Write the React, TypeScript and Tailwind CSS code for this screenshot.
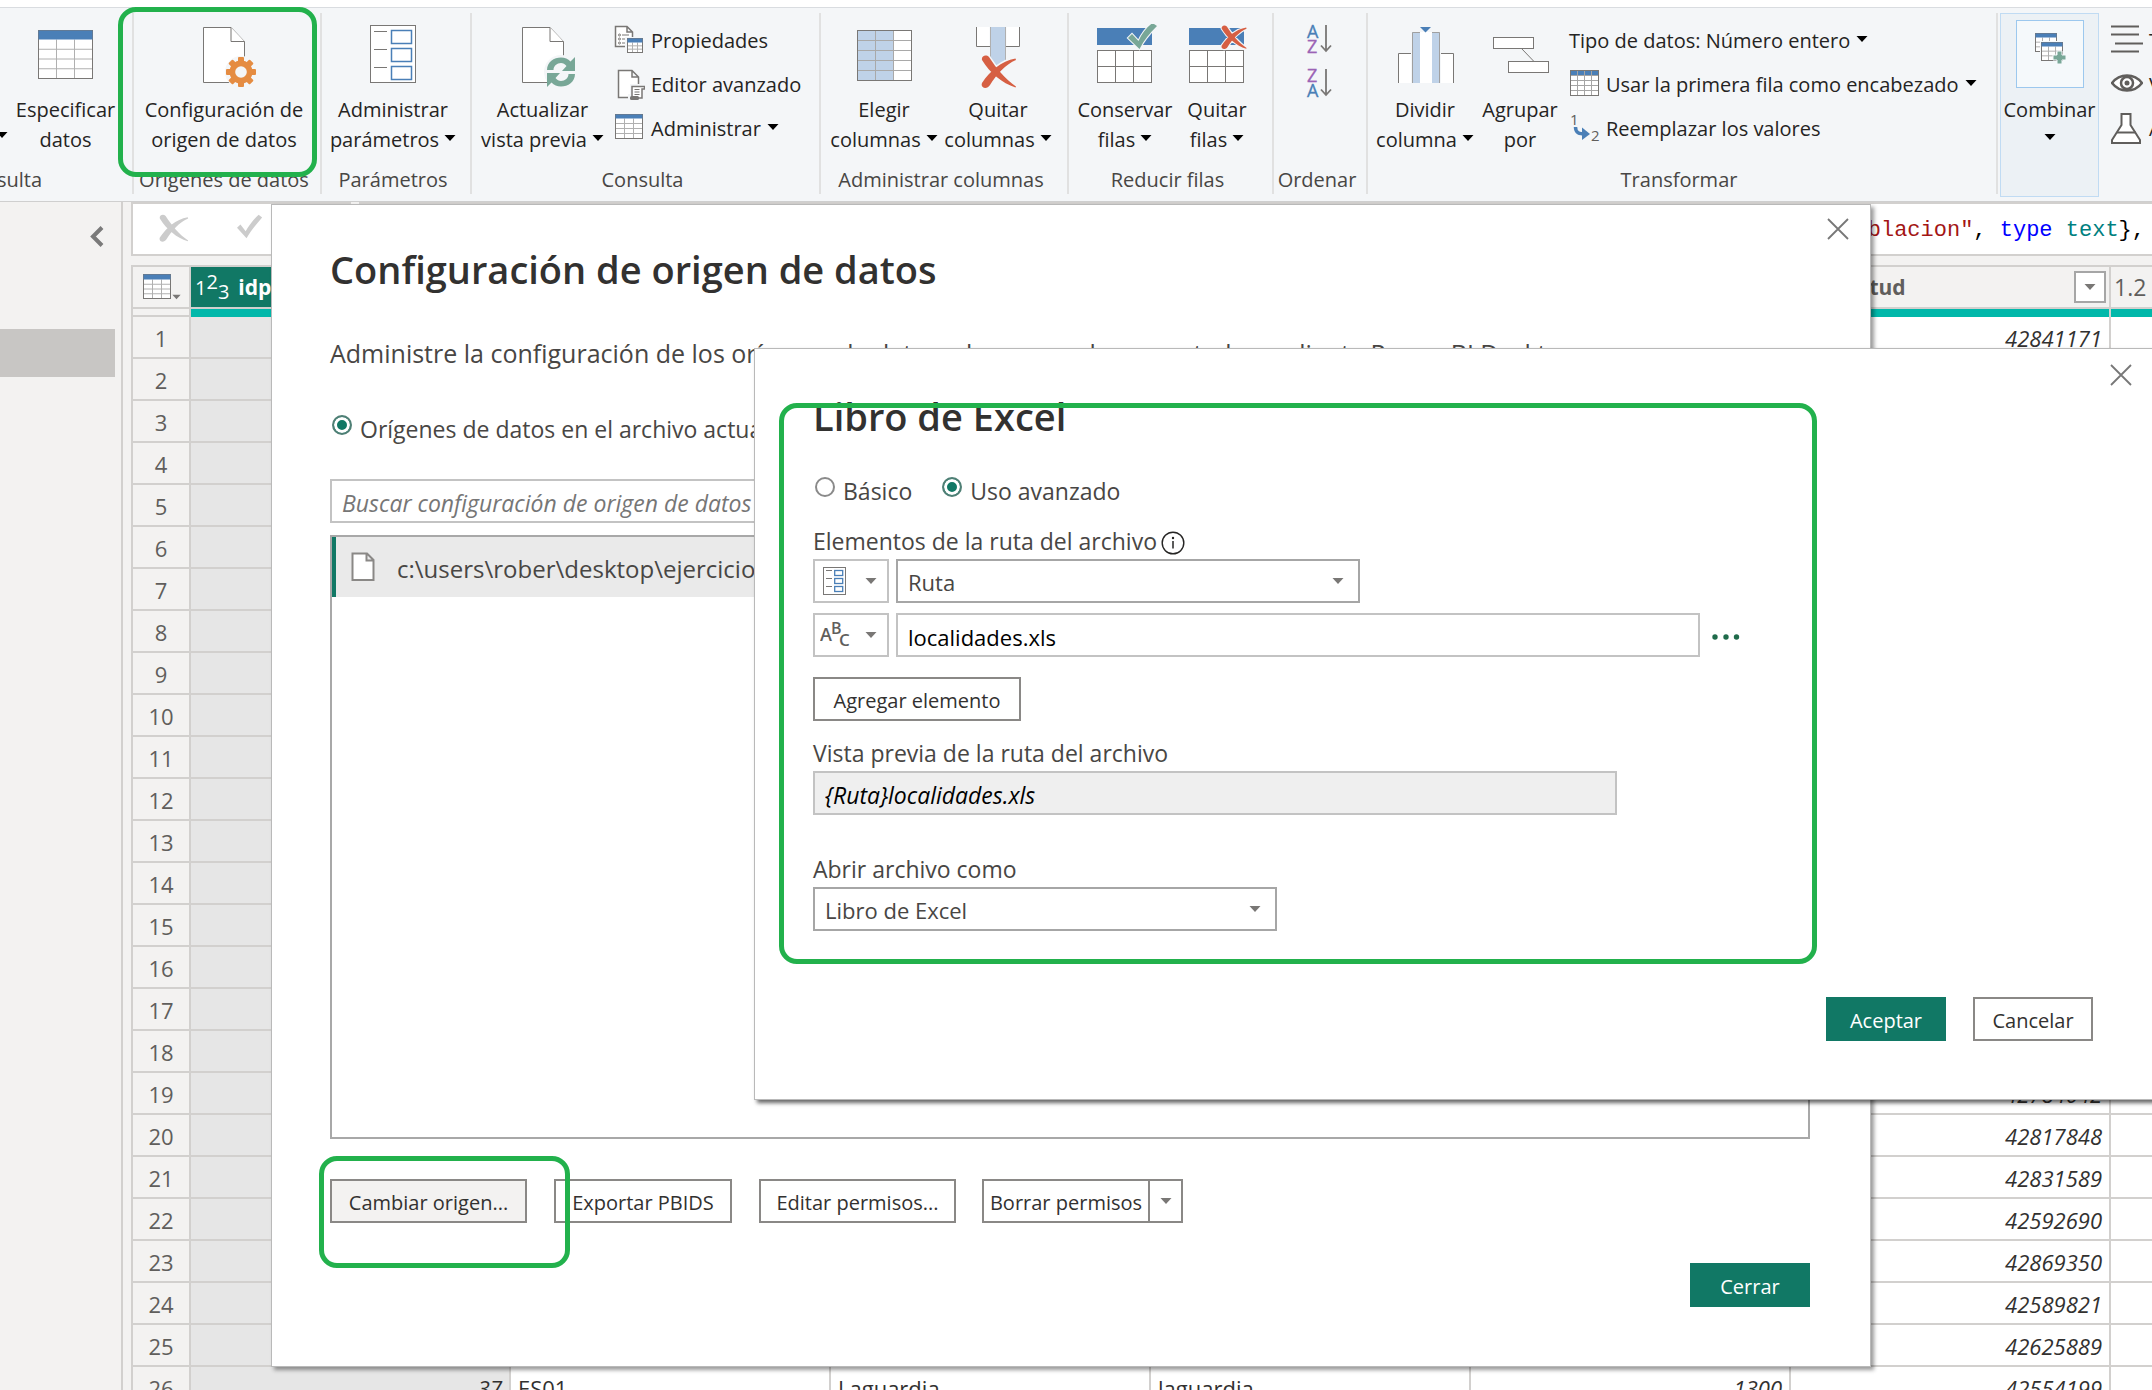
import React from "react";

const GRAY = "#797775";
const BLUE = "#4a7fb7";
const LIGHT = "#bfd2e8";
const TEAL = "#78a797";
const RED = "#d65f43";

type Kids = { children?: React.ReactNode };

/* ---------- shared drawings ---------- */

function Caret({ className = "mb-1 text-black" }: { className?: string }) {
  return (
    <svg width="12" height="6" viewBox="0 0 12 6" className={"inline-block shrink-0 " + className} aria-hidden="true">
      <path d="M0.5 0h11L6 6z" fill="currentColor" />
    </svg>
  );
}

function BigIcon({ children }: Kids) {
  return (
    <svg width="64" height="64" viewBox="0 0 64 64" fill="none" aria-hidden="true">
      {children}
    </svg>
  );
}

function SmallIcon({ children }: Kids) {
  return (
    <svg width="32" height="32" viewBox="0 0 32 32" fill="none" className="shrink-0" aria-hidden="true">
      {children}
    </svg>
  );
}

const CROSS =
  "M1 5C0 1 5 -1 8 2C15 13 24 24 35 31.500L34.500 32.500C21 28 9 18 1 5Z M34.500 3.500L35 5C25 9 15 20 9 30C6 35 -1 33 1 28C9 16 20 6 34.500 3.500Z";

function CrossShape({ color, halo }: { color: string; halo?: string }) {
  return (
    <g>
      {halo && <path d={CROSS} stroke={halo} strokeWidth="3" />}
      <path d={CROSS} fill={color} />
    </g>
  );
}

const CHECK = "M0 15L4 11L10.500 18C14 10 19 4 24.500 0L29 3C22 10 16 17 11.500 26Z";

function Grid({ x, y, w, h, cols, rows, head = 0 }: { x: number; y: number; w: number; h: number; cols: number; rows: number; head?: number }) {
  const lines: React.ReactNode[] = [];
  for (let i = 1; i < cols; i++) {
    const px = x + (w * i) / cols;
    lines.push(<path key={"c" + i} d={`M${px} ${y + head}V${y + h}`} stroke="#b0b0b0" />);
  }
  for (let i = 1; i < rows; i++) {
    const py = y + head + ((h - head) * i) / rows;
    lines.push(<path key={"r" + i} d={`M${x} ${py}H${x + w}`} stroke="#b0b0b0" />);
  }
  return (
    <g>
      <rect x={x} y={y} width={w} height={h} fill="#fff" />
      {lines}
      <rect x={x} y={y} width={w} height={h} stroke={GRAY} fill="none" />
      {head > 0 && <rect x={x} y={y} width={w} height={head} fill={BLUE} />}
    </g>
  );
}

function PageShape() {
  return (
    <g stroke={GRAY} fill="#fff">
      <path d="M11.500 3.500H39L52.500 17.500V58.500H11.500Z" />
      <path d="M39 3.500V17.500H52.500" />
    </g>
  );
}

function ParamsShape() {
  return (
    <g>
      <rect x="9.500" y="1.500" width="45" height="57" fill="#fff" stroke={GRAY} />
      {[6.5, 24.5, 42.5].map((y) => (
        <g key={y}>
          <path d={`M13 ${y + 1}H26`} stroke={GRAY} />
          <rect x="30.500" y={y} width="20" height="13" stroke={BLUE} strokeWidth="1.500" fill="#fff" />
        </g>
      ))}
    </g>
  );
}

function CloseIcon() {
  return (
    <svg width="22" height="22" viewBox="0 0 22 22" fill="none" aria-hidden="true">
      <path d="M1 1L21 21M21 1L1 21" stroke="#777" strokeWidth="1.800" />
    </svg>
  );
}

/* ---------- ribbon ---------- */

function Group({ label, className, children }: { label: string; className: string } & Kids) {
  return (
    <section className={"flex shrink-0 flex-col border-r-2 border-[#e1e1e1] " + className}>
      <div className="flex h-[152px] items-start pt-[11px]">{children}</div>
      <div className="whitespace-nowrap pr-[6px] pt-px text-center leading-7 text-[#484644]">{label}</div>
    </section>
  );
}

function BigButton({ lines, caret, className, icon }: { lines: [string, string]; caret?: boolean; className: string; icon: React.ReactNode }) {
  return (
    <button type="button" className={"flex shrink-0 flex-col items-center whitespace-nowrap leading-[30px] " + className}>
      <BigIcon>{icon}</BigIcon>
      <span className="mt-[7px]">{lines[0]}</span>
      <span className="flex items-center gap-[5px]">
        {lines[1]}
        {caret && <Caret />}
      </span>
    </button>
  );
}

function SmallButton({ icon, caret, children }: { icon?: React.ReactNode; caret?: boolean } & Kids) {
  return (
    <button type="button" className="flex h-[44px] items-center gap-[6px] whitespace-nowrap text-left">
      {icon && <SmallIcon>{icon}</SmallIcon>}
      <span>{children}</span>
      {caret && <Caret />}
    </button>
  );
}

function SmallList({ className = "", children }: { className?: string } & Kids) {
  return <div className={"-mt-[5px] flex flex-col " + className}>{children}</div>;
}

function SortButton({ first, second, label }: { first: [string, string]; second: [string, string]; label: string }) {
  return (
    <button type="button" aria-label={label} className="flex h-[44px] items-start">
      <svg width="28" height="30" viewBox="0 0 28 30" fill="none" fontFamily="Open Sans, sans-serif" fontSize="18">
        <text x="1" y="14" fill={first[1]} stroke={first[1]} strokeWidth="0.300">{first[0]}</text>
        <text x="1" y="29" fill={second[1]} stroke={second[1]} strokeWidth="0.300">{second[0]}</text>
        <path d="M20 1V27M15 21.500L20 27L25 21.500" stroke={GRAY} strokeWidth="1.800" />
      </svg>
    </button>
  );
}

function Ribbon() {
  return (
    <header className="flex h-[195px] shrink-0 items-start border-y border-b-[#cfcfcf] border-t-[#d9dce0] bg-[#f4f6f8] pt-[5px] text-xl text-[#252423]">
      <section className="flex w-[134px] shrink-0 flex-col border-r-2 border-[#e1e1e1]">
        <div className="flex h-[152px] items-start pt-[11px]">
          <button type="button" aria-label="Más opciones" className="flex h-[131px] w-2 items-end justify-end pb-[13px]">
            <Caret />
          </button>
          <BigButton className="w-[115px]" lines={["Especificar", "datos"]} icon={<Grid x={4.5} y={6.5} w={54} h={48} cols={3} rows={4} head={9} />} />
        </div>
        <div className="flex w-[42px] justify-end overflow-hidden whitespace-nowrap pt-px leading-7 text-[#484644]">Nueva consulta</div>
      </section>

      <Group label="Orígenes de datos" className="w-[188px]">
        <BigButton
          className="w-[180px]"
          lines={["Configuración de", "origen de datos"]}
          icon={
            <>
              <PageShape />
              <circle cx="49" cy="48" r="16" fill="#f4f6f8" />
              <g fill="#e58c42">
                {[0, 45, 90, 135].map((a) => (
                  <rect key={a} x="46" y="33" width="6" height="30" rx="1" transform={`rotate(${a} 49 48)`} />
                ))}
                <circle cx="49" cy="48" r="11.500" />
              </g>
              <circle cx="49" cy="48" r="5.800" fill="#f4f6f8" />
            </>
          }
        />
      </Group>

      <Group label="Parámetros" className="w-[150px]">
        <BigButton caret className="w-[142px]" lines={["Administrar", "parámetros"]} icon={<ParamsShape />} />
      </Group>

      <Group label="Consulta" className="w-[349px]">
        <BigButton
          caret
          className="w-[141px]"
          lines={["Actualizar", "vista previa"]}
          icon={
            <>
              <PageShape />
              <circle cx="50" cy="48" r="17" fill="#f4f6f8" />
              <g fill={TEAL}>
                <path d="M36 46C36 38 43 33.500 50 33.500C54 33.500 57 35 59.500 37.500L64 33V47H51L55.500 42C54 40 52 39 50 39C46 39 42.500 42 42.500 46Z" />
                <path d="M64 50C64 58 57 62.500 50 62.500C46 62.500 43 61 40.500 58.500L36 63V49H49L44.500 54C46 56 48 57 50 57C54 57 57.500 54 57.500 50Z" />
              </g>
            </>
          }
        />
        <SmallList>
          <SmallButton
            icon={
              <>
                <path d="M2.500 1.500H14L19.500 7V21.500H2.500Z M14 1.500V7H19.500" fill="#fff" stroke={GRAY} strokeWidth="1.500" />
                {[10, 14, 18].map((y) => (
                  <g key={y} stroke={GRAY}>
                    <circle cx="6.500" cy={y} r="1" />
                    <path d={`M9 ${y}H16`} />
                  </g>
                ))}
                <rect x="12" y="12" width="20" height="18" fill="#f4f6f8" />
                <Grid x={14.5} y={13.5} w={15} h={14} cols={3} rows={3} head={4} />
              </>
            }
          >
            Propiedades
          </SmallButton>
          <SmallButton
            icon={
              <>
                <path d="M5.500 1.500H19L25.500 8V28.500H5.500Z M19 1.500V8H25.500" fill="#fff" stroke={GRAY} strokeWidth="1.500" />
                <path d="M17 15H32V31H15V25H17Z" fill="#f4f6f8" />
                <path d="M19 27.500V17.500H31.500V20H29V29H20" fill="#fff" stroke={GRAY} strokeWidth="1.500" />
                <path d="M21.500 20.500H26.500M21.500 23H26.500M21.500 25.500H26.500" stroke={GRAY} />
                <rect x="17" y="27" width="9" height="4" rx="1.500" fill={GRAY} />
              </>
            }
          >
            Editor avanzado
          </SmallButton>
          <SmallButton caret icon={<Grid x={2.5} y={1.5} w={27} h={24} cols={3} rows={4} head={4} />}>
            Administrar
          </SmallButton>
        </SmallList>
      </Group>

      <Group label="Administrar columnas" className="w-[248px]">
        <BigButton
          caret
          className="ml-[6px] w-[114px]"
          lines={["Elegir", "columnas"]}
          icon={
            <>
              <rect x="5.500" y="6.500" width="54" height="50" fill="#fff" />
              <rect x="5.500" y="6.500" width="36" height="50" fill={LIGHT} />
              <path d="M23.500 6V57M41.500 6V57M5 16.500H60M5 26.500H60M5 36.500H60M5 46.500H60" stroke="#a9a9a9" />
              <rect x="5.500" y="6.500" width="54" height="50" stroke={GRAY} />
            </>
          }
        />
        <BigButton
          caret
          className="w-[114px]"
          lines={["Quitar", "columnas"]}
          icon={
            <>
              <path d="M10.500 3V22.500H23.500V3M40.500 3V22.500H53.500V3" fill="#fff" />
              <path d="M10.500 3V22.500H24M40 22.500H53.500V3" stroke={GRAY} />
              <path d="M24.500 3V38L32 42L39.500 36V3Z" fill={LIGHT} />
              <path d="M24.500 3V36M39.500 3V36" stroke="#b0b0b0" />
              <g transform="translate(15 31)">
                <CrossShape color={RED} halo="#f4f6f8" />
              </g>
            </>
          }
        />
      </Group>

      <Group label="Reducir filas" className="w-[205px]">
        <BigButton
          caret
          className="ml-[5px] w-[102px]"
          lines={["Conservar", "filas"]}
          icon={
            <>
              <rect x="4" y="4" width="55" height="17" fill={BLUE} />
              <rect x="4.500" y="26.500" width="54" height="32" fill="#fff" stroke={GRAY} />
              <path d="M22.500 26V59M40.500 26V59M4 42.500H59" stroke={GRAY} />
              <path d={CHECK} transform="translate(35 -1)" fill={TEAL} stroke="#f4f6f8" strokeWidth="2" style={{ paintOrder: "stroke" }} />
            </>
          }
        />
        <BigButton
          caret
          className="w-[82px]"
          lines={["Quitar", "filas"]}
          icon={
            <>
              <rect x="4" y="4" width="55" height="17" fill={BLUE} />
              <rect x="4.500" y="26.500" width="54" height="32" fill="#fff" stroke={GRAY} />
              <path d="M22.500 26V59M40.500 26V59M4 42.500H59" stroke={GRAY} />
              <g transform="translate(36 1) scale(0.73)">
                <CrossShape color={RED} halo="#f4f6f8" />
              </g>
            </>
          }
        />
      </Group>

      <Group label="Ordenar" className="w-[94px]">
        <div className="flex w-full flex-col items-center">
          <SortButton label="Orden ascendente" first={["A", BLUE]} second={["Z", "#9b63b5"]} />
          <SortButton label="Orden descendente" first={["Z", "#9b63b5"]} second={["A", BLUE]} />
        </div>
      </Group>

      <Group label="Transformar" className="w-[630px]">
        <BigButton
          caret
          className="ml-[5px] w-[104px]"
          lines={["Dividir", "columna"]}
          icon={
            <>
              <path d="M5.500 59V29.500H18V59M48 59V29.500H60.500V59" fill="#fff" />
              <path d="M5.500 59V29.500H18M48 29.500H60.500V59" stroke={GRAY} />
              <rect x="27" y="8" width="12" height="51" fill="#fff" />
              <path d="M19 8H27V59H19ZM39 8H47V59H39Z" fill={LIGHT} />
              <path d="M19.500 59V8.500H27M39 8.500H46.500V59" stroke="#a0a0a0" />
              <path d="M27 3H38L32.500 8.500Z" fill={BLUE} />
            </>
          }
        />
        <BigButton
          className="w-[86px]"
          lines={["Agrupar", "por"]}
          icon={
            <>
              <path d="M33.500 24.500L46 37.500" stroke={GRAY} />
              <rect x="5.500" y="13.500" width="40" height="11" fill="#fff" stroke={GRAY} />
              <rect x="20.500" y="37.500" width="40" height="11" fill="#fff" stroke={GRAY} />
            </>
          }
        />
        <SmallList className="ml-[5px]">
          <div className="pl-px">
            <SmallButton caret>Tipo de datos: Número entero</SmallButton>
          </div>
          <SmallButton
            caret
            icon={
              <>
                <rect x="2.500" y="1.500" width="28" height="25" fill="#fff" />
                <rect x="2" y="1" width="29" height="5" fill={BLUE} />
                <path d="M9.500 1V27M16.500 1V27M23.500 1V27M2 6.500H31M2 11.500H31M2 16.500H31M2 21.500H31" stroke="#a5a5a5" />
                <rect x="2.500" y="1.500" width="28" height="25" stroke={GRAY} />
              </>
            }
          >
            Usar la primera fila como encabezado
          </SmallButton>
          <SmallButton
            icon={
              <>
                <text x="2" y="12" fontSize="15" fill="#605e5c" fontFamily="Open Sans, sans-serif">1</text>
                <text x="23" y="28" fontSize="15" fill="#605e5c" fontFamily="Open Sans, sans-serif">2</text>
                <path d="M7.500 14C7.500 20 11 21 18 21" stroke={BLUE} strokeWidth="3.500" />
                <path d="M14 14.500L22 21L14 27Z" fill={BLUE} />
              </>
            }
          >
            Reemplazar los valores
          </SmallButton>
        </SmallList>
      </Group>

      <button type="button" className="ml-[2px] flex h-[184px] w-[99px] shrink-0 flex-col items-center border border-[#c0dbf3] bg-[#ecf1f5] pt-[6px]">
        <span className="flex size-[68px] items-start justify-center border border-[#9cc8ee] bg-[#f5f9fb] pt-3">
          <svg width="32" height="32" viewBox="0 0 32 32" fill="none" aria-hidden="true">
            <Grid x={1.5} y={0.5} w={21} h={18} cols={3} rows={3} head={4} />
            <rect x="6" y="8" width="25" height="22" fill="#f5f9fb" />
            <Grid x={7.5} y={9.5} w={21} h={18} cols={3} rows={3} head={4} />
            <path d="M23 18H28V22H32V27H28V31H23V27H19V22H23Z" fill={TEAL} stroke="#f5f9fb" />
          </svg>
        </span>
        <span className="mt-[7px] leading-[30px]">Combinar</span>
        <span className="flex h-[28px] items-center">
          <Caret />
        </span>
      </button>
      <div className="pt-[11px]">
        <SmallList className="ml-[12px]">
          <SmallButton icon={<path d="M0 1.500H28M0 9.500H28M4 18.500H32M0 26.500H28" stroke="#605e5c" strokeWidth="1.800" />}>Text Analytics</SmallButton>
          <SmallButton
            icon={
              <>
                <path d="M1 14C6 7.500 11 6.500 16 6.500S26 7.500 31 14C26 20.500 21 21.500 16 21.500S6 20.500 1 14Z" fill="#fff" stroke="#605e5c" strokeWidth="2.500" />
                <circle cx="16" cy="14" r="6" stroke="#605e5c" strokeWidth="2.500" fill="#fff" />
                <circle cx="16" cy="14" r="2.500" fill="#605e5c" />
              </>
            }
          >
            Vision
          </SmallButton>
          <SmallButton
            icon={
              <>
                <path d="M10.500 1H19.500V12L29 27V30H1V27L10.500 12Z" fill="#fff" stroke="#605e5c" strokeWidth="2" />
                <path d="M6 19.500H25" stroke="#605e5c" strokeWidth="2" />
              </>
            }
          >
            Azure Machine Learning
          </SmallButton>
        </SmallList>
      </div>
    </header>
  );
}

/* ---------- data grid ---------- */

const LATITUDES = [
  "42841171", "42845210", "42791364", "42883017", "42612845", "42570933", "42799120", "42650478", "42903316", "42588714",
  "42617209", "42845530", "42769981", "42821046", "42556672", "42640195", "42875503", "42733918", "42784042", "42817848",
  "42831589", "42592690", "42869350", "42589821", "42625889", "42554199",
];

function FilterButton() {
  return (
    <button type="button" aria-label="Filtrar" className="flex size-8 items-center justify-center border-2 border-[#a6a6a6] bg-white">
      <Caret className="text-[#797775]" />
    </button>
  );
}

function TypeDigits() {
  return (
    <span className="flex items-center text-[20px] leading-6">
      <span>1</span>
      <span className="pb-3">2</span>
      <span className="pt-2">3</span>
    </span>
  );
}

function DataGrid() {
  const plain = "border-b-2 border-r-2 border-[#d2d0ce] px-[7px]";
  const heads = ["provincia", "poblacion", "nombre", "habitantes"];
  return (
    <table className="w-[2300px] table-fixed border-separate border-spacing-0 border-l-2 border-t-2 border-[#d2d0ce] bg-white text-[22px] text-[#323130]">
      <colgroup>
        <col className="w-[58px]" />
        <col className="w-[320px]" />
        <col className="w-[320px]" />
        <col className="w-[320px]" />
        <col className="w-[320px]" />
        <col className="w-[320px]" />
        <col className="w-[320px]" />
        <col className="w-[320px]" />
      </colgroup>
      <thead>
        <tr className="h-[42px] bg-[#f3f2f1] text-left text-[21px] text-[#605e5c]">
          <th className="border-b-2 border-r-2 border-[#d2d0ce] p-0">
            <button type="button" aria-label="Opciones de tabla" className="flex items-end pl-[10px]">
              <svg width="29" height="26" viewBox="0 0 29 26" fill="none" aria-hidden="true">
                <Grid x={0.5} y={0.5} w={27} h={24} cols={3} rows={4} head={5} />
              </svg>
              <Caret className="w-[9px] text-[#797775]" />
            </button>
          </th>
          <th className="border-b-2 border-r-2 border-[#d2d0ce] bg-[#117865] px-[4px] py-0 font-normal text-white">
            <span className="flex items-center gap-[9px] pt-[2px]">
              <TypeDigits />
              <b>idpoblacion</b>
            </span>
          </th>
          {heads.map((h) => (
            <th key={h} className={plain + " py-0"}>{h}</th>
          ))}
          <th className="border-b-2 border-r-2 border-[#d2d0ce] px-[3px] py-0">
            <span className="flex items-center justify-between">
              <span className="flex items-center gap-[3px] pt-[2px]">
                <span className="text-[23px] font-normal leading-8">1.2</span>
                Latitud
              </span>
              <FilterButton />
            </span>
          </th>
          <th className="border-b-2 border-r-2 border-[#d2d0ce] px-[3px] py-0 text-[23px] font-normal leading-8">1.2</th>
        </tr>
        <tr className="h-2">
          <td className="border-b-2 border-r-2 border-[#d2d0ce] bg-[#f3f2f1] p-0" />
          {[0, 1, 2, 3, 4, 5, 6].map((i) => (
            <td key={i} className="border-r-2 border-[#d2d0ce] bg-[#01b8aa] p-0" />
          ))}
        </tr>
      </thead>
      <tbody>
        {LATITUDES.map((lat, i) => {
          const last = i === 25;
          return (
            <tr key={lat} className="h-[42px] leading-8">
              <th scope="row" className="border-b-2 border-r-2 border-[#d2d0ce] bg-[#f3f2f1] px-0 pb-0 pt-[2px] text-center font-normal text-[#605e5c]">
                {i + 1}
              </th>
              <td className={plain + " bg-[#e6e6e6] pb-0 pt-[2px] text-right italic"}>{last ? "37" : ""}</td>
              <td className={plain + " pb-0 pt-[2px]"}>{last ? "ES01" : ""}</td>
              <td className={plain + " pb-0 pt-[2px]"}>{last ? "Laguardia" : ""}</td>
              <td className={plain + " pb-0 pt-[2px]"}>{last ? "laguardia" : ""}</td>
              <td className={plain + " pb-0 pt-[2px] text-right italic"}>{last ? "1300" : ""}</td>
              <td className={plain + " pb-0 pt-[2px] text-right italic"}>{lat}</td>
              <td className={plain + " pb-0 pt-[2px]"} />
            </tr>
          );
        })}
      </tbody>
    </table>
  );
}

function Workspace() {
  return (
    <main className="flex min-h-0 flex-1 bg-[#f3f2f1]">
      <aside className="flex w-[123px] shrink-0 flex-col border-r-2 border-[#d2d0ce]">
        <div className="flex justify-end pr-[17px] pt-6">
          <button type="button" aria-label="Contraer panel">
            <svg width="14" height="21" viewBox="0 0 14 21" fill="none" aria-hidden="true">
              <path d="M12 1.500L3 10.500L12 19.500" stroke="#7a7a7a" strokeWidth="4" />
            </svg>
          </button>
        </div>
        <div className="mr-[6px] mt-[82px] h-12 bg-[#c8c6c4]" />
      </aside>
      <div className="flex min-w-0 flex-1 flex-col overflow-hidden pl-2">
        <div className="mb-[9px] flex h-[54px] shrink-0 gap-2">
          <div className="flex w-[220px] items-start gap-12 border-2 border-[#d2d0ce] bg-white pl-[26px] pt-[10px]">
            <button type="button" aria-label="Cancelar fórmula">
              <svg width="30" height="28" viewBox="0 0 36 33" aria-hidden="true">
                <CrossShape color="#cccccc" />
              </svg>
            </button>
            <button type="button" aria-label="Confirmar fórmula">
              <svg width="26" height="26" viewBox="0 0 30 30" aria-hidden="true">
                <path d="M0 16L4 12L10 20C14 13 19 6 25 1L29 4C22 12 16 19 11 28Z" fill="#cccccc" />
              </svg>
            </button>
          </div>
          <code className="flex min-w-0 flex-1 justify-end whitespace-pre border-y-2 border-l-2 border-[#d2d0ce] bg-white pr-[7px] font-['Liberation_Mono',monospace] text-[22px] leading-[54px] text-black">
            <span>{"{"}</span>
            <span className="text-[#a31515]">"poblacion"</span>
            <span>, </span>
            <span className="text-[#0000ff]">type </span>
            <span className="text-[#008080]">text</span>
            <span>{"},"}</span>
          </code>
        </div>
        <DataGrid />
      </div>
    </main>
  );
}

/* ---------- dialogs ---------- */

const RADIO =
  "size-5 shrink-0 appearance-none rounded-full border-2 border-[#8a8a8a] bg-white checked:border-[#4f7f75] checked:bg-[#117865] checked:shadow-[inset_0_0_0_3px_white]";

function OutlineButton({ className, children }: { className: string } & Kids) {
  return (
    <button type="button" className={"h-[44px] whitespace-nowrap border-2 border-[#8a8886] pt-[3px] text-xl text-[#323130] " + className}>
      {children}
    </button>
  );
}

function PrimaryButton({ children }: Kids) {
  return (
    <button type="button" className="h-[44px] w-[120px] bg-[#117865] pt-[3px] text-xl text-white">
      {children}
    </button>
  );
}

function SourceSettingsDialog() {
  return (
    <section
      role="dialog"
      aria-labelledby="settings-title"
      className="absolute left-[271px] right-[281px] top-[204px] border border-[#b9b9b9] bg-white pb-[59px] pl-[58px] pr-[60px] pt-[37px] text-[23px] text-[#484644] shadow-[3px_3px_4px_rgba(0,0,0,0.4)]"
    >
      <button type="button" aria-label="Cerrar ventana" className="absolute right-[21px] top-[13px]">
        <CloseIcon />
      </button>
      <h1 id="settings-title" className="text-[38px] font-semibold leading-[54px] text-[#323130]">
        Configuración de origen de datos
      </h1>
      <p className="mt-[41px] text-[25px] leading-8">
        Administre la configuración de los orígenes de datos a los que se ha conectado mediante Power BI Desktop.
      </p>
      <label className="mt-[46px] flex items-start gap-[8px] leading-7">
        <input type="radio" name="scope" defaultChecked className={RADIO + " ml-[2px]"} />
        <span>Orígenes de datos en el archivo actual</span>
      </label>
      <input
        type="text"
        aria-label="Buscar"
        placeholder="Buscar configuración de origen de datos"
        className="mt-[36px] block h-[44px] w-full border-2 border-[#c3c3c3] px-[10px] pt-[3px] italic placeholder:text-[#767676]"
      />
      <ul className="mt-3 h-[604px] border-2 border-[#a8a8a8]">
        <li className="flex h-[60px] items-center border-l-4 border-[#117865] bg-[#eaeaea] pl-[15px] text-2xl">
          <svg width="24" height="30" viewBox="0 0 24 30" className="mr-[22px] shrink-0" aria-hidden="true">
            <path d="M1.500 1.500H16L22.500 8V28H1.500Z M15.500 1.500V8.500H22.500" fill="#fff" stroke="#8a8886" strokeWidth="2" />
          </svg>
          <span className="pt-[3px]">c:\users\rober\desktop\ejercicios\localidades.xls</span>
        </li>
      </ul>
      <div className="mt-[40px] flex">
        <OutlineButton className="mr-[27px] w-[197px] bg-[#f3f2f1]">Cambiar origen...</OutlineButton>
        <OutlineButton className="mr-[27px] w-[178px]">Exportar PBIDS</OutlineButton>
        <OutlineButton className="mr-[26px] w-[197px]">Editar permisos...</OutlineButton>
        <OutlineButton className="w-[168px]">Borrar permisos</OutlineButton>
        <button type="button" aria-label="Más opciones de borrado" className="-ml-[2px] flex h-[44px] w-[35px] items-center justify-center border-2 border-[#8a8886]">
          <Caret className="text-[#797775]" />
        </button>
      </div>
      <div className="mt-[40px] flex justify-end">
        <PrimaryButton>Cerrar</PrimaryButton>
      </div>
    </section>
  );
}

function SelectBox({ id, value }: { id: string; value: string }) {
  return (
    <span className="relative block w-[464px]">
      <select id={id} className="block h-[44px] w-full appearance-none border-2 border-[#a6a6a6] bg-white px-[10px] pt-[3px] text-[22px]">
        <option>{value}</option>
      </select>
      <Caret className="pointer-events-none absolute right-4 top-[19px] text-[#797775]" />
    </span>
  );
}

const KIND = "flex h-[44px] w-[76px] shrink-0 items-center justify-between border-2 border-[#c3c3c3] pr-[10px]";

function ExcelDialog() {
  return (
    <section
      role="dialog"
      aria-labelledby="excel-title"
      className="absolute -right-[2px] left-[754px] top-[348px] border border-[#b9b9b9] bg-white pb-[58px] pl-[58px] pr-[60px] pt-[40px] text-[23px] text-[#484644] shadow-[3px_3px_4px_rgba(0,0,0,0.6)]"
    >
      <button type="button" aria-label="Cerrar ventana" className="absolute right-[21px] top-[15px]">
        <CloseIcon />
      </button>
      <h2 id="excel-title" className="text-[38px] font-semibold leading-[54px] text-[#323130]">
        Libro de Excel
      </h2>
      <div className="mt-[34px] flex gap-[30px] pl-[2px] leading-7">
        <label className="flex items-start gap-[8px]">
          <input type="radio" name="mode" className={RADIO} />
          <span>Básico</span>
        </label>
        <label className="flex items-start gap-[8px]">
          <input type="radio" name="mode" defaultChecked className={RADIO} />
          <span>Uso avanzado</span>
        </label>
      </div>
      <div className="mt-[20px] flex items-center gap-1 leading-8">
        <label htmlFor="part-1">Elementos de la ruta del archivo</label>
        <svg width="24" height="24" viewBox="0 0 24 24" fill="none" aria-hidden="true" className="mt-1">
          <circle cx="12" cy="12" r="10.800" stroke="#252423" strokeWidth="1.400" />
          <path d="M12 10V17.500" stroke="#252423" strokeWidth="1.500" />
          <circle cx="12" cy="7" r="1.200" fill="#252423" />
        </svg>
      </div>
      <div className="mt-[2px] flex gap-[7px]">
        <button type="button" aria-label="Parámetro" className={KIND + " pl-[8px]"}>
          <svg width="24" height="30" viewBox="0 0 24 30" fill="none" aria-hidden="true">
            <rect x="0.500" y="1.500" width="22" height="27" fill="#fff" stroke={GRAY} />
            {[4.5, 12.5, 20.5].map((y) => (
              <g key={y}>
                <path d={`M3 ${y}H9`} stroke={GRAY} />
                <rect x="11.700" y={y} width="8" height="5" stroke={BLUE} strokeWidth="1.300" />
              </g>
            ))}
          </svg>
          <Caret className="text-[#797775]" />
        </button>
        <SelectBox id="part-1" value="Ruta" />
      </div>
      <div className="mt-[10px] flex items-center gap-[7px]">
        <button type="button" aria-label="Texto" className={KIND + " pl-[5px]"}>
          <svg width="30" height="28" viewBox="0 0 30 28" fill="#605e5c" fontFamily="Open Sans, sans-serif" fontWeight="600" aria-hidden="true">
            <text x="0" y="20" fontSize="18">A</text>
            <text x="11" y="13" fontSize="16">B</text>
            <text x="19" y="25" fontSize="17">C</text>
          </svg>
          <Caret className="text-[#797775]" />
        </button>
        <input
          type="text"
          aria-label="Elemento 2"
          defaultValue="localidades.xls"
          className="h-[44px] w-[804px] border-2 border-[#c3c3c3] px-[10px] pt-[3px] text-[22px] text-black"
        />
        <button type="button" aria-label="Más" className="ml-[5px] pt-1">
          <svg width="28" height="6" viewBox="0 0 28 6" fill="#1f6b4b" aria-hidden="true">
            <circle cx="3" cy="3" r="2.700" />
            <circle cx="14" cy="3" r="2.700" />
            <circle cx="24.500" cy="3" r="2.700" />
          </svg>
        </button>
      </div>
      <OutlineButton className="mt-5 block w-[208px]">Agregar elemento</OutlineButton>
      <label htmlFor="preview" className="mt-[16px] block leading-8">
        Vista previa de la ruta del archivo
      </label>
      <input
        id="preview"
        type="text"
        readOnly
        defaultValue="{Ruta}localidades.xls"
        className="mt-[2px] block h-[44px] w-[804px] border-2 border-[#c3c3c3] bg-[#efefef] px-[10px] pt-[3px] italic text-black"
      />
      <label htmlFor="open-as" className="mb-[2px] mt-[38px] block leading-8">
        Abrir archivo como
      </label>
      <SelectBox id="open-as" value="Libro de Excel" />
      <div className="mt-[66px] flex justify-end gap-[27px]">
        <PrimaryButton>Aceptar</PrimaryButton>
        <OutlineButton className="w-[120px]">Cancelar</OutlineButton>
      </div>
    </section>
  );
}

function Highlight({ className }: { className: string }) {
  return <div className={"pointer-events-none absolute rounded-[18px] border-[5px] border-[#22b14c] " + className} />;
}

export default function App() {
  return (
    <div className="relative flex h-screen flex-col overflow-hidden bg-white pt-[7px] font-['Open_Sans',sans-serif]">
      <Ribbon />
      <Workspace />
      <SourceSettingsDialog />
      <ExcelDialog />
      <Highlight className="left-[118px] top-[7px] h-[170px] w-[199px]" />
      <Highlight className="left-[319px] top-[1156px] h-[112px] w-[251px]" />
      <Highlight className="left-[779px] right-[335px] top-[403px] h-[561px]" />
    </div>
  );
}
